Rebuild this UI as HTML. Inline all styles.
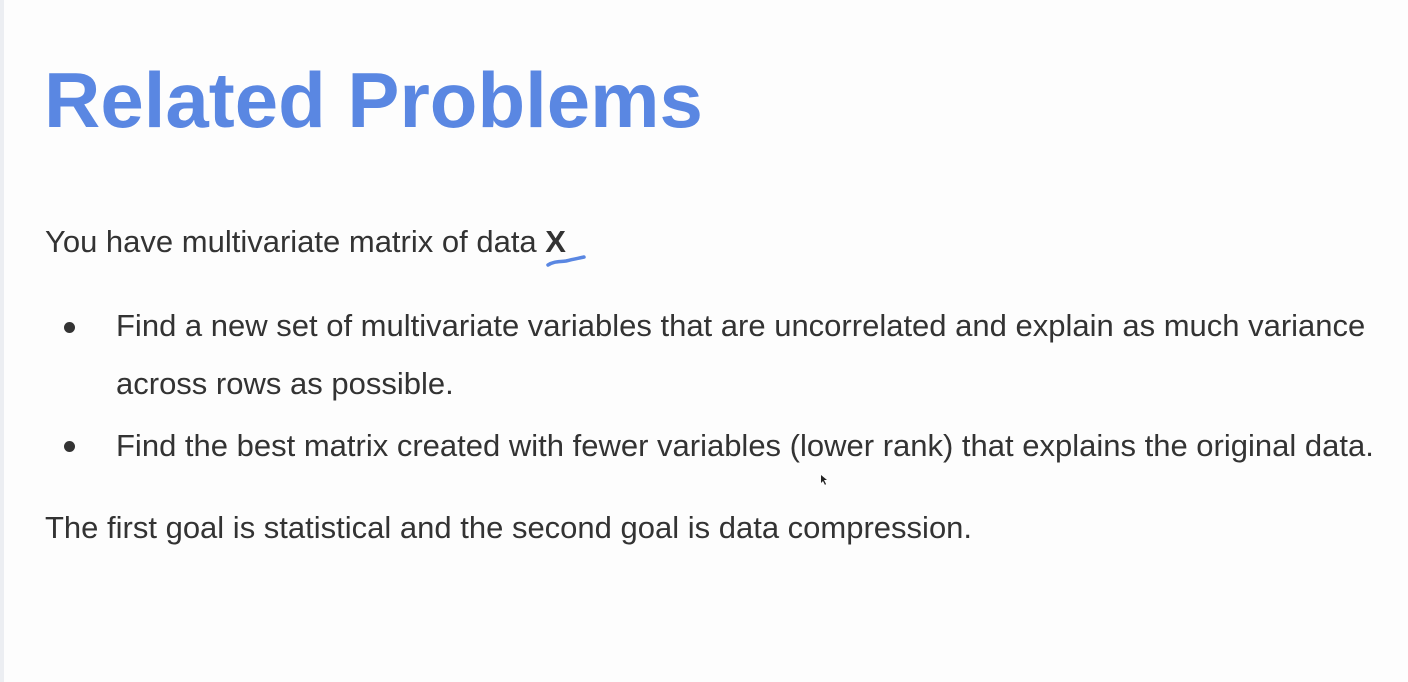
<!DOCTYPE html>
<html><head><meta charset="utf-8"><style>
html,body{margin:0;padding:0;}
body{width:1408px;height:682px;background:#fdfdfd;position:relative;overflow:hidden;font-family:"Liberation Sans",Arial,sans-serif;}
.strip{position:absolute;left:0;top:0;width:4px;height:682px;background:#eceef2;}
.t{position:absolute;line-height:1;white-space:nowrap;color:#333;font-size:31px;}
.title{font-size:78px;font-weight:bold;color:#5a87e2;}
.dot{position:absolute;width:11px;height:11px;border-radius:50%;background:#333;}
</style></head><body>
<div class="strip"></div>
<div class="t title" style="left:44px;top:61px;">Related Problems</div>
<div class="t" style="left:45px;top:226px;">You have multivariate matrix of data <b>X</b></div>
<svg style="position:absolute;left:544px;top:252px" width="44" height="18"><path d="M4 13 C10 9 16 10 22 9 C30 7 36 6 40 5" stroke="#5a87e2" stroke-width="3.5" fill="none" stroke-linecap="round"/></svg>
<div class="dot" style="left:64px;top:322px;"></div>
<div class="t" style="left:116px;top:310px;">Find a new set of multivariate variables that are uncorrelated and explain as much variance</div>
<div class="t" style="left:116px;top:368px;">across rows as possible.</div>
<div class="dot" style="left:64px;top:441px;"></div>
<div class="t" style="left:116px;top:430px;">Find the best matrix created with fewer variables (lower rank) that explains the original data.</div>
<div class="t" style="left:45px;top:512px;">The first goal is statistical and the second goal is data compression.</div>
<svg style="position:absolute;left:820px;top:474px" width="10" height="12"><path d="M1 1 L1 9 L3 7 L5 11 L6 10 L4 6 L7 6 Z" fill="#222"/></svg>
</body></html>
